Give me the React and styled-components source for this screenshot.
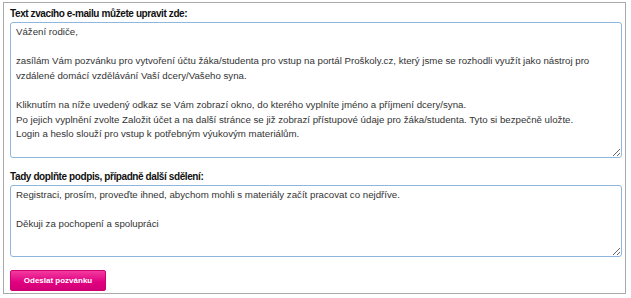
import React from "react";
import styled, { createGlobalStyle } from "styled-components";

const Global = createGlobalStyle`
  html, body { margin: 0; padding: 0; background: #fff; }
  body { font-family: "Liberation Sans", Arial, sans-serif; }
`;

const Panel = styled.div`
  box-sizing: border-box;
  margin: 2px 0 0 3px;
  width: 623px;
  height: 292px;
  border: 1px solid #a9a9a9;
  padding: 3px 3px 0 6px;
  display: flex;
  flex-direction: column;
`;

const Label = styled.label`
  display: block;
  font-weight: bold;
  font-size: 10px;
  letter-spacing: -0.4px;
  line-height: 15px;
  color: #111;
  margin-bottom: 1px;
`;

const Area = styled.textarea`
  box-sizing: border-box;
  display: block;
  width: 612px;
  height: ${(p) => p.$h}px;
  margin: 0 0 ${(p) => p.$mb}px 0;
  padding: 2px 5px;
  border: 1px solid #8fb7dd;
  border-radius: 3px;
  font-family: "Liberation Sans", Arial, sans-serif;
  font-size: 9.7px;
  line-height: 14.6px;
  color: #333;
  background: #fff;
  outline: none;
  resize: vertical;
`;

const Button = styled.button`
  box-sizing: border-box;
  width: 96px;
  height: 21px;
  padding: 0;
  border: 1px solid #d0006f;
  border-radius: 2px;
  background: linear-gradient(#f33aa0, #e0007f 60%, #d20077);
  color: #fff;
  font-family: "Liberation Sans", Arial, sans-serif;
  font-weight: bold;
  font-size: 8px;
  white-space: nowrap;
  cursor: pointer;
`;

const text1 = `Vážení rodiče,

zasílám Vám pozvánku pro vytvoření účtu žáka/studenta pro vstup na portál Proškoly.cz, který jsme se rozhodli využít jako nástroj pro vzdálené domácí vzdělávání Vaší dcery/Vašeho syna.

Kliknutím na níže uvedený odkaz se Vám zobrazí okno, do kterého vyplníte jméno a příjmení dcery/syna.
Po jejich vyplnění zvolte Založit účet a na další stránce se již zobrazí přístupové údaje pro žáka/studenta. Tyto si bezpečně uložte.
Login a heslo slouží pro vstup k potřebným výukovým materiálům.`;

const text2 = `Registraci, prosím, proveďte ihned, abychom mohli s materiály začít pracovat co nejdříve.

Děkuji za pochopení a spolupráci`;

export default function App() {
  return (
    <>
      <Global />
      <Panel>
        <Label>Text zvacího e-mailu můžete upravit zde:</Label>
        <Area $h={136} $mb={11} defaultValue={text1} />
        <Label>Tady doplňte podpis, případně další sdělení:</Label>
        <Area $h={72} $mb={13} defaultValue={text2} />
        <Button>Odeslat pozvánku</Button>
      </Panel>
    </>
  );
}
